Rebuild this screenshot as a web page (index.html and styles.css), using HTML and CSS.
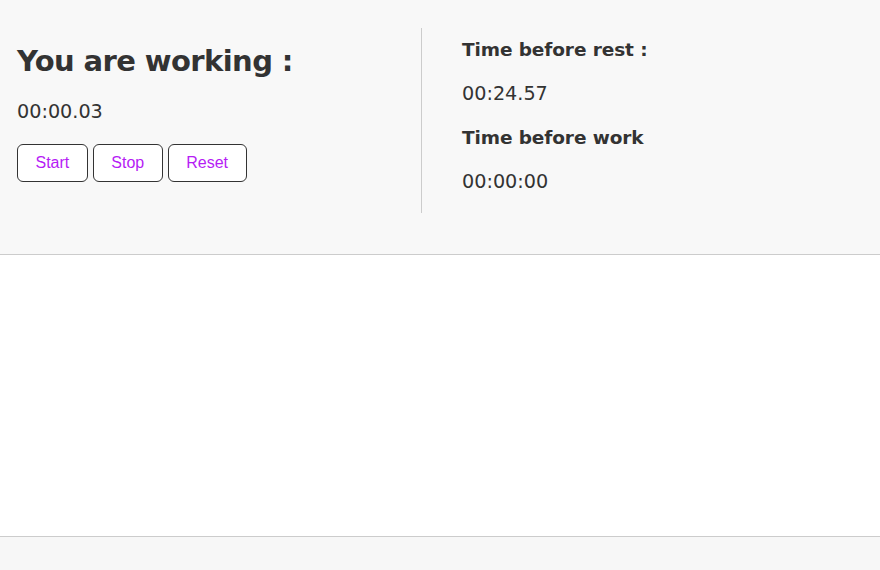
FILE: index.html
```html
<!DOCTYPE html>
<html>
<head>
<meta charset="utf-8">
<link rel="stylesheet" href="styles.css">
</head>
<body>
<header class="panel">
  <div class="columns">
    <section class="col-left">
      <h1 class="title">You are working :</h1>
      <p class="timer">00:00.03</p>
      <div class="buttons">
        <button class="btn">Start</button>
        <button class="btn">Stop</button>
        <button class="btn">Reset</button>
      </div>
    </section>
    <section class="col-right">
      <h3 class="label">Time before rest :</h3>
      <p class="timer">00:24.57</p>
      <h3 class="label">Time before work</h3>
      <p class="timer">00:00:00</p>
    </section>
  </div>
</header>
<main class="content"></main>
<footer class="footer"></footer>
</body>
</html>
```

FILE: styles.css
```css
* { box-sizing: border-box; }
html, body { margin: 0; padding: 0; }
body {
  font-family: "DejaVu Sans", sans-serif;
  color: #333;
  background: #fff;
}
.panel {
  background: #f8f8f8;
  height: 255px;
  border-bottom: 1px solid #ccc;
  padding-top: 28px;
}
.columns {
  display: flex;
  height: 185px;
}
.col-left {
  width: 421px;
  padding-left: 17px;
}
.col-right {
  border-left: 1px solid #ccc;
  padding-left: 40px;
  padding-top: 10px;
}
.title {
  margin: 13px 0 0;
  font-size: 29px;
  line-height: 40px;
  letter-spacing: -0.6px;
  font-weight: bold;
}
.timer {
  margin: 19px 0 0;
  font-size: 19.2px;
  line-height: 24px;
  font-weight: normal;
}
.col-right .timer { margin: 20px 0 0; }
.label {
  margin: 0;
  font-size: 18.5px;
  line-height: 24px;
  letter-spacing: -0.1px;
  font-weight: bold;
}
.col-right .timer + .label { margin-top: 20px; }
.buttons {
  display: flex;
  gap: 5px;
  margin-top: 20px;
}
.btn {
  height: 38px;
  padding: 0 17.5px;
  font-family: "Liberation Sans", Arial, sans-serif;
  font-size: 16px;
  color: #b61cf5;
  background: #fff;
  border: 1px solid #333;
  border-radius: 6px;
}
.content {
  height: 282px;
  border-bottom: 1px solid #ccc;
}
.footer {
  height: 40px;
  background: #f7f7f7;
}
```
